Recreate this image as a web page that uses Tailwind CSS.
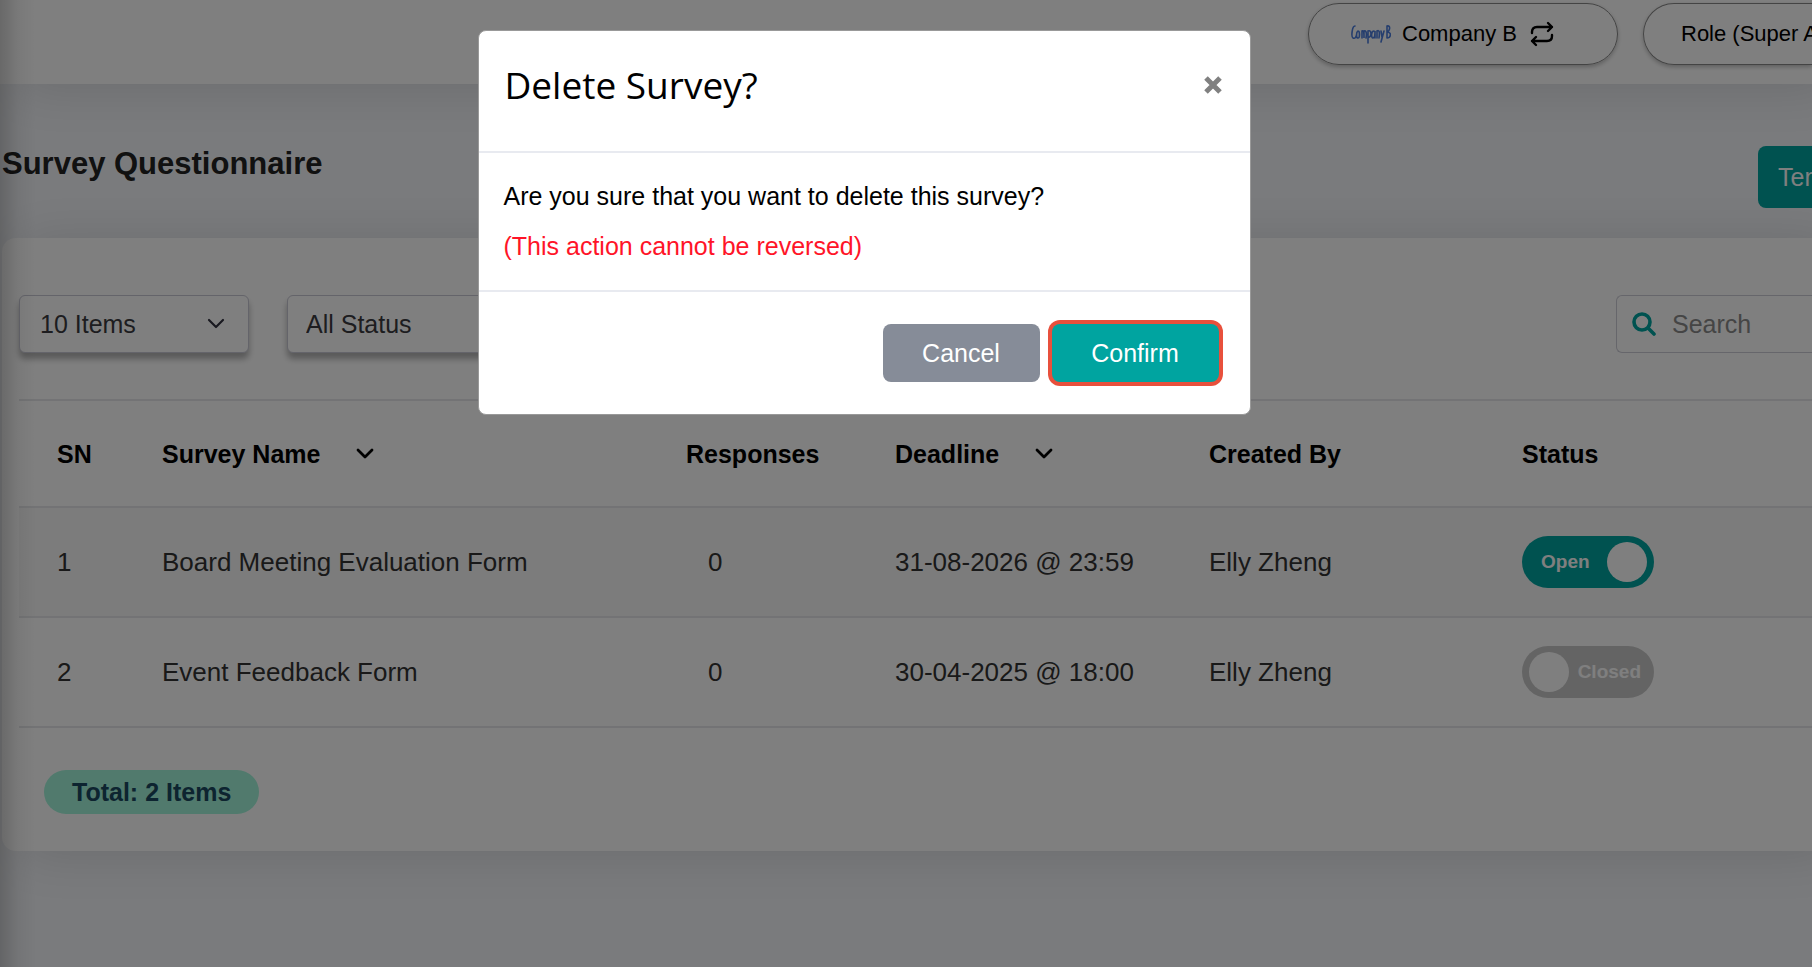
<!DOCTYPE html>
<html lang="en">
  <head>
    <meta charset="UTF-8" />
    <meta name="viewport" content="width=device-width, initial-scale=1.0" />
    <title>Survey Questionnaire</title>
    <script src="https://cdn.jsdelivr.net/npm/@tailwindcss/browser@4"></script>
  </head>
  <body class="relative min-h-screen overflow-x-hidden bg-[#f4f6fa] font-['Liberation_Sans',Arial,sans-serif] text-[25px] leading-[36px] text-black">
    <header class="relative flex h-[84px] items-start justify-end gap-[25px] bg-white pt-[3px] shadow-[20px_4px_50px_rgba(0,0,0,0.12)]">
      <button type="button" class="flex h-[62px] w-[310px] items-center rounded-full border border-[#888] pl-[41px] text-[22px] shadow-[0_2px_4px_rgba(0,0,0,0.25)]">
        <svg class="mr-[11px] h-[22px] w-[41px]" viewBox="0 0 41 22" fill="none" stroke="#4a7cdc" stroke-width="1.6" stroke-linecap="round" aria-hidden="true">
          <path d="M5 3C2 3 1 14 3 15s3-1 3-2M8 8c-2 1-2 7 0 7s2-7 0-7M12 15V8c2-1 2 2 2 7V8c2-1 3 2 2 7M18 20V8c4-2 4 7 0 6M24 8c-3 0-3 7-1 7s2-7 2-7v7M27 15V8c2-1 3 0 2 7M31 8l1 6M34 8l-3 11M37 15V3c4-1 3 5 0 6 5 0 4 6 0 6" />
        </svg>
        Company B
        <svg class="ml-[13px] h-[26px] w-[24px]" viewBox="0 0 24 26" fill="none" stroke="black" stroke-width="2.4" stroke-linecap="round" stroke-linejoin="round" aria-hidden="true">
          <path d="M18 2l4 4-4 4M22 6H7C3.500 6 2 8 2 11v1M6 16l-4 4 4 4M2 20h15c3.500 0 5-2 5-5v-1" />
        </svg>
      </button>
      <button type="button" class="h-[62px] w-[169px] overflow-hidden rounded-l-full border border-r-0 border-[#888] pl-[37px] text-left text-[22px] whitespace-nowrap shadow-[0_2px_4px_rgba(0,0,0,0.25)]">Role (Super Admin)</button>
    </header>

    <main class="pl-[2px]">
      <div class="flex items-start justify-between pt-[62px] pb-[30px]">
        <h1 class="text-[31px] leading-[36px] font-bold text-[#222]">Survey Questionnaire</h1>
        <button type="button" class="h-[62px] w-[54px] overflow-hidden rounded-l-lg bg-[#00a4a0] pl-[20px] text-left whitespace-nowrap text-white">Templates</button>
      </div>

      <section class="rounded-l-[14px] bg-white pl-[17px] shadow-[20px_4px_50px_rgba(0,0,0,0.12)]">
        <div class="flex items-center pt-[57px] pb-[46px]">
          <div class="relative w-[230px]">
            <select aria-label="Items per page" class="h-[58px] w-full appearance-none rounded-md border border-[#c8c8d4] bg-white pl-[20px] text-[#3a3a40] shadow-[0_6px_6px_rgba(0,0,0,0.3)]">
              <option>10 Items</option>
            </select>
            <svg class="pointer-events-none absolute top-[23px] right-[24px] h-[12px] w-[18px]" viewBox="0 0 18 12" fill="none" stroke="#333340" stroke-width="2.2" stroke-linecap="round" stroke-linejoin="round" aria-hidden="true"><path d="M2 2l7 7 7-7" /></svg>
          </div>
          <div class="ml-[38px] w-[230px]">
            <select aria-label="Status" class="h-[58px] w-full appearance-none rounded-md border border-[#c8c8d4] bg-white pl-[18px] text-[#3a3a40] shadow-[0_6px_6px_rgba(0,0,0,0.3)]">
              <option>All Status</option>
            </select>
          </div>
          <label class="ml-auto flex h-[58px] w-[196px] items-center gap-[16px] rounded-l-md border border-r-0 border-[#ccccd6] pl-[15px]">
            <svg class="h-[24px] w-[24px] shrink-0" viewBox="0 0 24 24" fill="none" stroke="#00a4a0" stroke-width="3.6" stroke-linecap="round" aria-hidden="true"><circle cx="10" cy="10" r="8" /><path d="M16 16l6 6" /></svg>
            <input type="search" aria-label="Search" placeholder="Search" class="w-full min-w-0 outline-none placeholder:text-[#8a8a8a]" />
          </label>
        </div>

        <table class="w-full table-fixed border-collapse text-left">
          <colgroup>
            <col class="w-[105px]" />
            <col class="w-[524px]" />
            <col class="w-[209px]" />
            <col class="w-[314px]" />
            <col class="w-[313px]" />
            <col />
          </colgroup>
          <thead>
            <tr class="h-[107px] border-y-2 border-[#e6e7ea]">
              <th class="pl-[38px]">SN</th>
              <th class="pl-[38px]">
                <div class="flex items-center gap-[36px]">Survey Name
                  <svg class="h-[12px] w-[18px]" viewBox="0 0 18 12" fill="none" stroke="black" stroke-width="2.8" stroke-linecap="round" stroke-linejoin="round" aria-hidden="true"><path d="M2 2l7 7 7-7" /></svg>
                </div>
              </th>
              <th class="pl-[38px]">Responses</th>
              <th class="pl-[38px]">
                <div class="flex items-center gap-[36px]">Deadline
                  <svg class="h-[12px] w-[18px]" viewBox="0 0 18 12" fill="none" stroke="black" stroke-width="2.8" stroke-linecap="round" stroke-linejoin="round" aria-hidden="true"><path d="M2 2l7 7 7-7" /></svg>
                </div>
              </th>
              <th class="pl-[38px]">Created By</th>
              <th class="pl-[38px]">Status</th>
            </tr>
          </thead>
          <tbody class="text-[26px] text-[#333]">
            <tr class="h-[110px] border-b-2 border-[#e6e7ea] bg-[#f8f8f8]">
              <td class="pl-[38px]">1</td>
              <td class="pl-[38px]">Board Meeting Evaluation Form</td>
              <td class="pl-[60px]">0</td>
              <td class="pl-[38px]">31-08-2026 @ 23:59</td>
              <td class="pl-[38px]">Elly Zheng</td>
              <td class="pl-[38px]">
                <button type="button" role="switch" aria-checked="true" class="flex h-[52px] w-[132px] items-center justify-between rounded-full bg-[#00a4a0] pr-[7px] pl-[19px] text-[19px] font-bold text-white">Open<span class="size-[40px] rounded-full bg-white"></span></button>
              </td>
            </tr>
            <tr class="h-[110px] border-b-2 border-[#e6e7ea]">
              <td class="pl-[38px]">2</td>
              <td class="pl-[38px]">Event Feedback Form</td>
              <td class="pl-[60px]">0</td>
              <td class="pl-[38px]">30-04-2025 @ 18:00</td>
              <td class="pl-[38px]">Elly Zheng</td>
              <td class="pl-[38px]">
                <button type="button" role="switch" aria-checked="false" class="flex h-[52px] w-[132px] items-center justify-between rounded-full bg-[#c9c9c9] pr-[13px] pl-[7px] text-[19px] font-bold text-white"><span class="size-[40px] rounded-full bg-white"></span>Closed</button>
              </td>
            </tr>
          </tbody>
        </table>

        <div class="px-[25px] pt-[42px] pb-[37px]">
          <span class="inline-flex h-[44px] items-center rounded-full bg-[#a2f4da] px-[28px] align-top font-bold text-[#1a4860]">Total: 2 Items</span>
        </div>
      </section>
    </main>

    <!-- sidebar shadow and backdrop -->
    <div class="pointer-events-none absolute inset-y-0 left-0 w-[36px] bg-linear-to-r from-black/18 via-black/5 to-transparent"></div>
    <div class="fixed inset-0 bg-black/50"></div>

    <!-- delete dialog -->
    <div class="fixed inset-x-0 top-[30px] flex justify-center">
      <div role="dialog" aria-modal="true" aria-labelledby="dialog-title" class="mr-[84px] w-[773px] rounded-lg border border-[#999] bg-white">
        <div class="flex h-[122px] items-start justify-between border-b-2 border-[#e8eaf0] pt-[27px] pr-[28px] pl-[26px]">
          <h2 id="dialog-title" class="font-['Open_Sans','Noto_Sans',sans-serif] text-[37px] leading-[54px]">Delete Survey?</h2>
          <button type="button" aria-label="Close" class="flex h-[54px] items-center">
            <svg class="h-[18px] w-[18px]" viewBox="0 0 18 18" stroke="#808080" stroke-width="5" aria-hidden="true"><path d="M2 2l14 14M16 2L2 16" /></svg>
          </button>
        </div>
        <div class="border-b-2 border-[#e8eaf0] px-[25px] pt-[25px] pb-[26px]">
          <p class="mb-[14px]">Are you sure that you want to delete this survey?</p>
          <p class="text-[#ff1428]">(This action cannot be reversed)</p>
        </div>
        <div class="flex items-center justify-end gap-[12px] pt-[32px] pr-[31px] pb-[32px]">
          <button type="button" class="h-[58px] w-[157px] rounded-lg bg-[#868c98] text-white">Cancel</button>
          <button type="button" class="h-[58px] w-[167px] rounded-lg bg-[#00a4a0] text-white ring-4 ring-[#e8503c]">Confirm</button>
        </div>
      </div>
    </div>
  </body>
</html>
